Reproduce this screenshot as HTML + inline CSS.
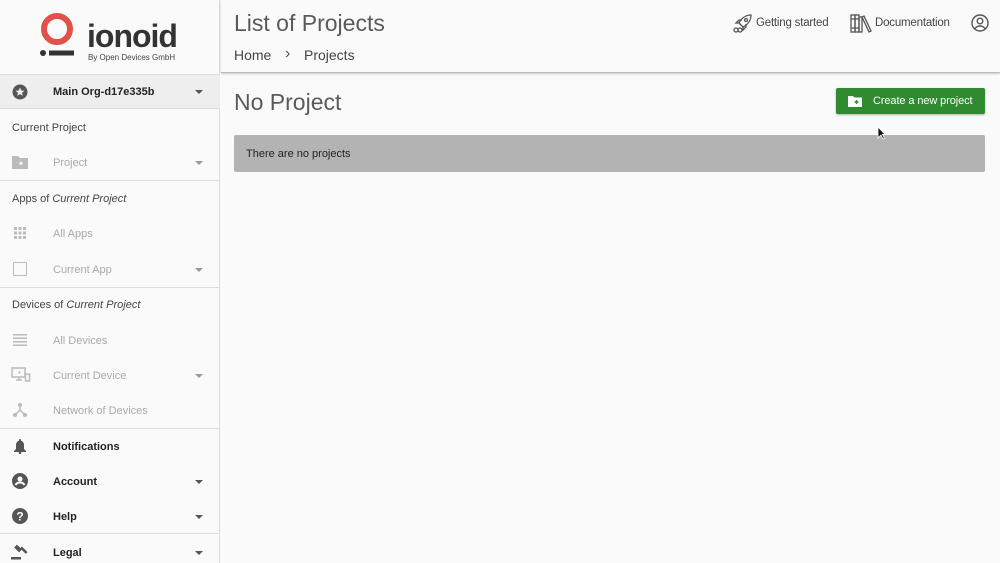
<!DOCTYPE html>
<html><head><meta charset="utf-8"><style>
*{box-sizing:border-box;margin:0;padding:0}
body{width:1000px;height:563px;overflow:hidden;background:#fbfafb;font-family:"Liberation Sans",Arial,sans-serif;position:relative;color:#333}
.sb{position:absolute;left:0;top:0;width:220px;height:563px;border-right:1px solid #ddd;background:#fbfafb}
.abs{position:absolute}
.hr{position:absolute;left:0;width:220px;height:1px;background:#ddd}
.lab{position:absolute;left:12px;font-size:11px;color:#444}
.item{position:absolute;left:53px;font-size:11px;color:#aaa}
.dk{color:#222;font-weight:bold;font-size:11px}
.car{position:absolute;left:195px;width:0;height:0;border-left:4px solid transparent;border-right:4px solid transparent;border-top:4px solid #999}
.car.d{border-top-color:#555}
</style></head><body>
<div class="sb">
  <svg class="abs" style="left:38px;top:13px" width="40" height="46" viewBox="0 0 40 46">
    <circle cx="19" cy="16" r="13" fill="none" stroke="#e2504a" stroke-width="6"/>
    <circle cx="5" cy="40" r="3" fill="#333"/>
    <rect x="11" y="37.5" width="25" height="5" fill="#333"/>
  </svg>
  <div class="abs" style="left:87px;top:18px;font-size:32px;font-weight:bold;color:#333;letter-spacing:-1px;line-height:36px">ionoid</div>
  <div class="abs" style="left:88px;top:53px;font-size:8px;color:#444">By Open Devices GmbH</div>
  <div class="abs" style="left:0;top:74px;width:220px;height:35px;background:#efeeef;border-top:1px solid #ddd;border-bottom:1px solid #ddd"></div>
  <svg class="abs" style="left:12px;top:84px" width="16" height="16" viewBox="0 0 16 16"><circle cx="8" cy="8" r="7.5" fill="#555"/><path d="M8 3.5l1.3 3 3.2.2-2.5 2 .8 3.1L8 10.1 5.2 11.8 6 8.7 3.5 6.7l3.2-.2z" fill="#efeeef"/></svg>
  <div class="abs dk" style="left:53px;top:86px">Main Org-d17e335b</div>
  <div class="car d" style="top:90px"></div>
  <div class="lab" style="top:122px">Current Project</div>
  <svg class="abs" style="left:12px;top:155px" width="16" height="14" viewBox="0 0 16 14"><path d="M0 1h6l2 2h8v11H0z" fill="#bbb"/><path d="M9 6l.7 1.5 1.6.1-1.2 1 .4 1.6L9 9.3l-1.5.9.4-1.6-1.2-1 1.6-.1z" fill="#fff"/></svg>
  <div class="item" style="top:157px">Project</div>
  <div class="car" style="top:161px"></div>
  <div class="hr" style="top:180px"></div>
  <div class="lab" style="top:193px">Apps of <i>Current Project</i></div>
  <svg class="abs" style="left:14px;top:227px" width="12" height="12" viewBox="0 0 12 12" fill="#bbb"><rect x="0" y="0" width="3" height="3"/><rect x="4.5" y="0" width="3" height="3"/><rect x="9" y="0" width="3" height="3"/><rect x="0" y="4.5" width="3" height="3"/><rect x="4.5" y="4.5" width="3" height="3"/><rect x="9" y="4.5" width="3" height="3"/><rect x="0" y="9" width="3" height="3"/><rect x="4.5" y="9" width="3" height="3"/><rect x="9" y="9" width="3" height="3"/></svg>
  <div class="item" style="top:228px">All Apps</div>
  <div class="abs" style="left:13px;top:262px;width:14px;height:14px;border:1.5px solid #bbb;border-radius:1px"></div>
  <div class="item" style="top:264px">Current App</div>
  <div class="car" style="top:268px"></div>
  <div class="hr" style="top:287px"></div>
  <div class="lab" style="top:299px">Devices of <i>Current Project</i></div>
  <svg class="abs" style="left:13px;top:334px" width="14" height="12" viewBox="0 0 14 12" fill="#bbb"><rect y="0" width="14" height="1.5"/><rect y="3.5" width="14" height="1.5"/><rect y="7" width="14" height="1.5"/><rect y="10.5" width="14" height="1.5"/></svg>
  <div class="item" style="top:335px">All Devices</div>
  <svg class="abs" style="left:11px;top:367px" width="20" height="16" viewBox="0 0 20 16" fill="none" stroke="#bbb" stroke-width="1.5"><rect x="1" y="1" width="13" height="9"/><path d="M5 13h6M8 10v3M7.5 5.5h2M8.5 4.5v2"/><rect x="14.5" y="7" width="4" height="7"/></svg>
  <div class="item" style="top:370px">Current Device</div>
  <div class="car" style="top:374px"></div>
  <svg class="abs" style="left:13px;top:403px" width="14" height="14" viewBox="0 0 14 14" fill="#bbb"><circle cx="7" cy="2" r="2"/><circle cx="2" cy="12" r="2"/><circle cx="12" cy="12" r="2"/><path d="M7 2v5L2 12M7 7l5 5" stroke="#bbb" stroke-width="1.5" fill="none"/></svg>
  <div class="item" style="top:405px">Network of Devices</div>
  <div class="hr" style="top:428px"></div>
  <svg class="abs" style="left:14px;top:439px" width="12" height="15" viewBox="0 0 12 15" fill="#555"><path d="M6 0c.6 0 1 .4 1 1v.7C9 2.2 10 4 10 6v4l2 2v1H0v-1l2-2V6c0-2 1-3.8 3-4.3V1c0-.6.4-1 1-1z"/><circle cx="6" cy="14" r="1.3"/></svg>
  <div class="abs dk" style="left:53px;top:441px">Notifications</div>
  <svg class="abs" style="left:12px;top:473px" width="16" height="16" viewBox="0 0 16 16"><circle cx="8" cy="8" r="8" fill="#555"/><circle cx="8" cy="6" r="2.5" fill="#fbfafb"/><path d="M3.5 12c1-2 2.5-2.5 4.5-2.5s3.5.5 4.5 2.5" stroke="#fbfafb" stroke-width="2" fill="none"/></svg>
  <div class="abs dk" style="left:53px;top:476px">Account</div>
  <div class="car d" style="top:480px"></div>
  <svg class="abs" style="left:12px;top:508px" width="16" height="16" viewBox="0 0 16 16"><circle cx="8" cy="8" r="8" fill="#555"/><text x="8" y="12.5" font-size="12" font-weight="bold" fill="#fbfafb" text-anchor="middle" font-family="Liberation Sans">?</text></svg>
  <div class="abs dk" style="left:53px;top:511px">Help</div>
  <div class="car d" style="top:515px"></div>
  <div class="hr" style="top:533px"></div>
  <svg class="abs" style="left:11px;top:544px" width="18" height="16" viewBox="0 0 18 16" fill="#555"><rect x="5" y="1" width="4" height="7" transform="rotate(-45 7 4.5)"/><rect x="9" y="5" width="8" height="2.5" transform="rotate(45 13 6)"/><rect x="0" y="13" width="10" height="2.5"/></svg>
  <div class="abs dk" style="left:53px;top:547px">Legal</div>
  <div class="car d" style="top:551px"></div>
</div>
<div class="abs" style="left:221px;top:0;width:779px;height:73px;border-bottom:1px solid #bbb;box-shadow:0 1px 2px rgba(0,0,0,.2)"></div>
<div class="abs" style="left:234px;top:10px;font-size:23px;color:#5a5a5a">List of Projects</div>
<div class="abs" style="left:234px;top:47px;font-size:14px;color:#444">Home</div>
<div class="abs" style="left:285px;top:45px;font-size:16px;color:#555">&#8250;</div>
<div class="abs" style="left:304px;top:47px;font-size:14px;color:#444">Projects</div>
<svg class="abs" style="left:733px;top:14px" width="20" height="19" viewBox="0 0 20 19" fill="none" stroke="#555" stroke-width="1.3"><path d="M8 11l-2-2c2-4 6-8 12-8 0 6-4 10-8 12z"/><circle cx="13" cy="6" r="1.5"/><path d="M6 9H3l3-3h3M10 13v3l3-3v-3"/><circle cx="3" cy="16" r="2"/><circle cx="7" cy="16" r="2"/></svg>
<div class="abs" style="left:756px;top:17px;font-size:11.5px;color:#444;letter-spacing:-0.2px">Getting started</div>
<svg class="abs" style="left:850px;top:13px" width="22" height="20" viewBox="0 0 22 20" fill="none" stroke="#555" stroke-width="1.3"><rect x="1" y="2" width="4" height="17"/><rect x="5" y="2" width="4" height="17"/><rect x="9" y="4" width="3" height="15"/><path d="M12 4l2-1 7 15-2 1zM1 6h8M1 15h8"/></svg>
<div class="abs" style="left:875px;top:17px;font-size:11.5px;color:#444;letter-spacing:-0.2px">Documentation</div>
<svg class="abs" style="left:971px;top:14px" width="18" height="18" viewBox="0 0 18 18" fill="none" stroke="#555" stroke-width="1.4"><circle cx="9" cy="9" r="8"/><circle cx="9" cy="7" r="2.8"/><path d="M4 14.5c1.5-2 3-2.5 5-2.5s3.5.5 5 2.5"/></svg>
<div class="abs" style="left:234px;top:89px;font-size:23px;color:#5a5a5a">No Project</div>
<div class="abs" style="left:836px;top:88px;width:149px;height:26px;background:#2f8a30;border-radius:2px;box-shadow:0 1px 2px rgba(0,0,0,.3)"></div>
<svg class="abs" style="left:848px;top:95px" width="14" height="12" viewBox="0 0 14 12"><path d="M0 1h5l1.5 1.5H14V12H0z" fill="#fff"/><path d="M8.5 5v4M6.5 7h4" stroke="#2f8a30" stroke-width="1.4"/></svg>
<div class="abs" style="left:873px;top:95px;font-size:11px;color:#fff;letter-spacing:-0.1px">Create a new project</div>
<div class="abs" style="left:234px;top:135px;width:751px;height:37px;background:#b4b3b4;border-radius:2px"></div>
<div class="abs" style="left:246px;top:148px;font-size:11px;color:#222">There are no projects</div>
<svg class="abs" style="left:877px;top:126px" width="9" height="14" viewBox="0 0 9 14"><path d="M1 1v11l3-3 2 4 1.5-.7-2-4H8z" fill="#111" stroke="#fff" stroke-width=".8"/></svg>
</body></html>
